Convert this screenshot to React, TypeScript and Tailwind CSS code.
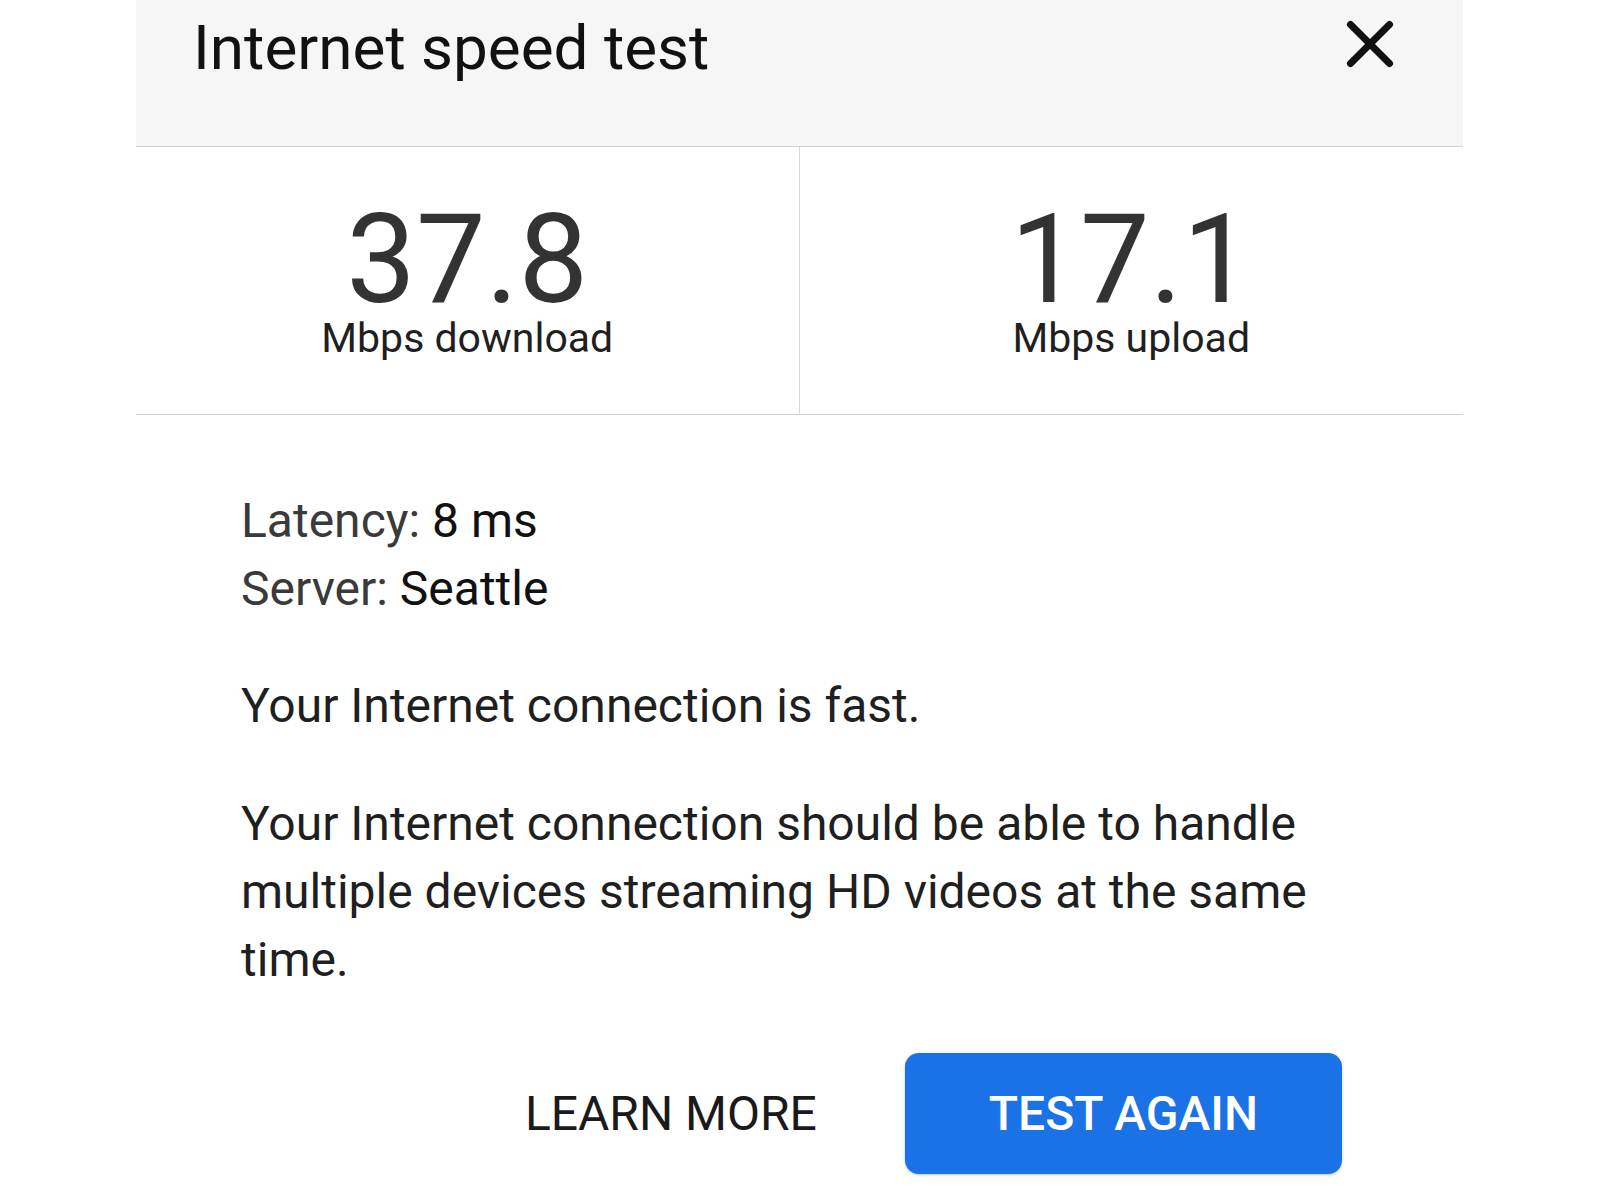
const stats = [
  { value: "37.8", label: "Mbps download" },
  { value: "17.1", label: "Mbps upload" },
];

function CloseIcon() {
  return (
    <svg
      viewBox="0 0 24 24"
      className="h-[78px] w-[78px]"
      fill="none"
      stroke="#111111"
      strokeWidth={2.15}
      strokeLinecap="round"
      aria-hidden
    >
      <path d="M18 6 6 18" />
      <path d="m6 6 12 12" />
    </svg>
  );
}

export default function App() {
  return (
    <div className="min-h-screen bg-white font-['Roboto','Liberation_Sans',sans-serif]">
      <div className="ml-[136px] w-[1327px]">
        <header className="flex h-[147px] items-start justify-between border-b border-[#d2d2d2] bg-[#f6f6f6] pl-[57px] pr-[54px]">
          <h1 className="mt-[17px] text-[62px] leading-none font-normal text-[#111111]">
            Internet speed test
          </h1>
          <button type="button" aria-label="Close" className="mt-[5px]">
            <CloseIcon />
          </button>
        </header>

        <section className="grid h-[268px] grid-cols-2 border-b border-[#d2d2d2]">
          {stats.map((s, i) => (
            <div
              key={s.label}
              className={
                i === 0
                  ? "flex flex-col items-center border-r border-[#d8d8d8] pt-[57px]"
                  : "flex flex-col items-center pt-[57px]"
              }
            >
              <div className="text-[124px] leading-[112px] text-[#333333]">{s.value}</div>
              <div className="mt-[2px] text-[41px] leading-none text-[#1f1f1f]">
                {s.label}
              </div>
            </div>
          ))}
        </section>

        <section className="pl-[105px] pr-[121px] pt-[72px] text-[48px] leading-[68px] text-[#1f1f1f]">
          <p>
            <span className="text-[#3a3a3a]">Latency: </span>
            <span className="text-[#111111]">8 ms</span>
          </p>
          <p>
            <span className="text-[#3a3a3a]">Server: </span>
            <span className="text-[#111111]">Seattle</span>
          </p>
          <p className="mt-[49px]">Your Internet connection is fast.</p>
          <p className="mt-[50px] w-[1110px]">
            Your Internet connection should be able to handle multiple devices
            streaming HD videos at the same time.
          </p>

          <div className="mt-[59px] flex justify-end gap-[4px]">
            <button
              type="button"
              className="h-[121px] px-[84px] text-[48px] leading-none font-normal text-[#1a1a1a]"
            >
              LEARN MORE
            </button>
            <button
              type="button"
              className="h-[121px] rounded-[14px] bg-[#1b72e6] px-[84px] text-[48px] leading-none font-medium text-white shadow-[0_1px_3px_rgba(0,0,0,0.25)]"
            >
              TEST AGAIN
            </button>
          </div>
        </section>
      </div>
    </div>
  );
}
